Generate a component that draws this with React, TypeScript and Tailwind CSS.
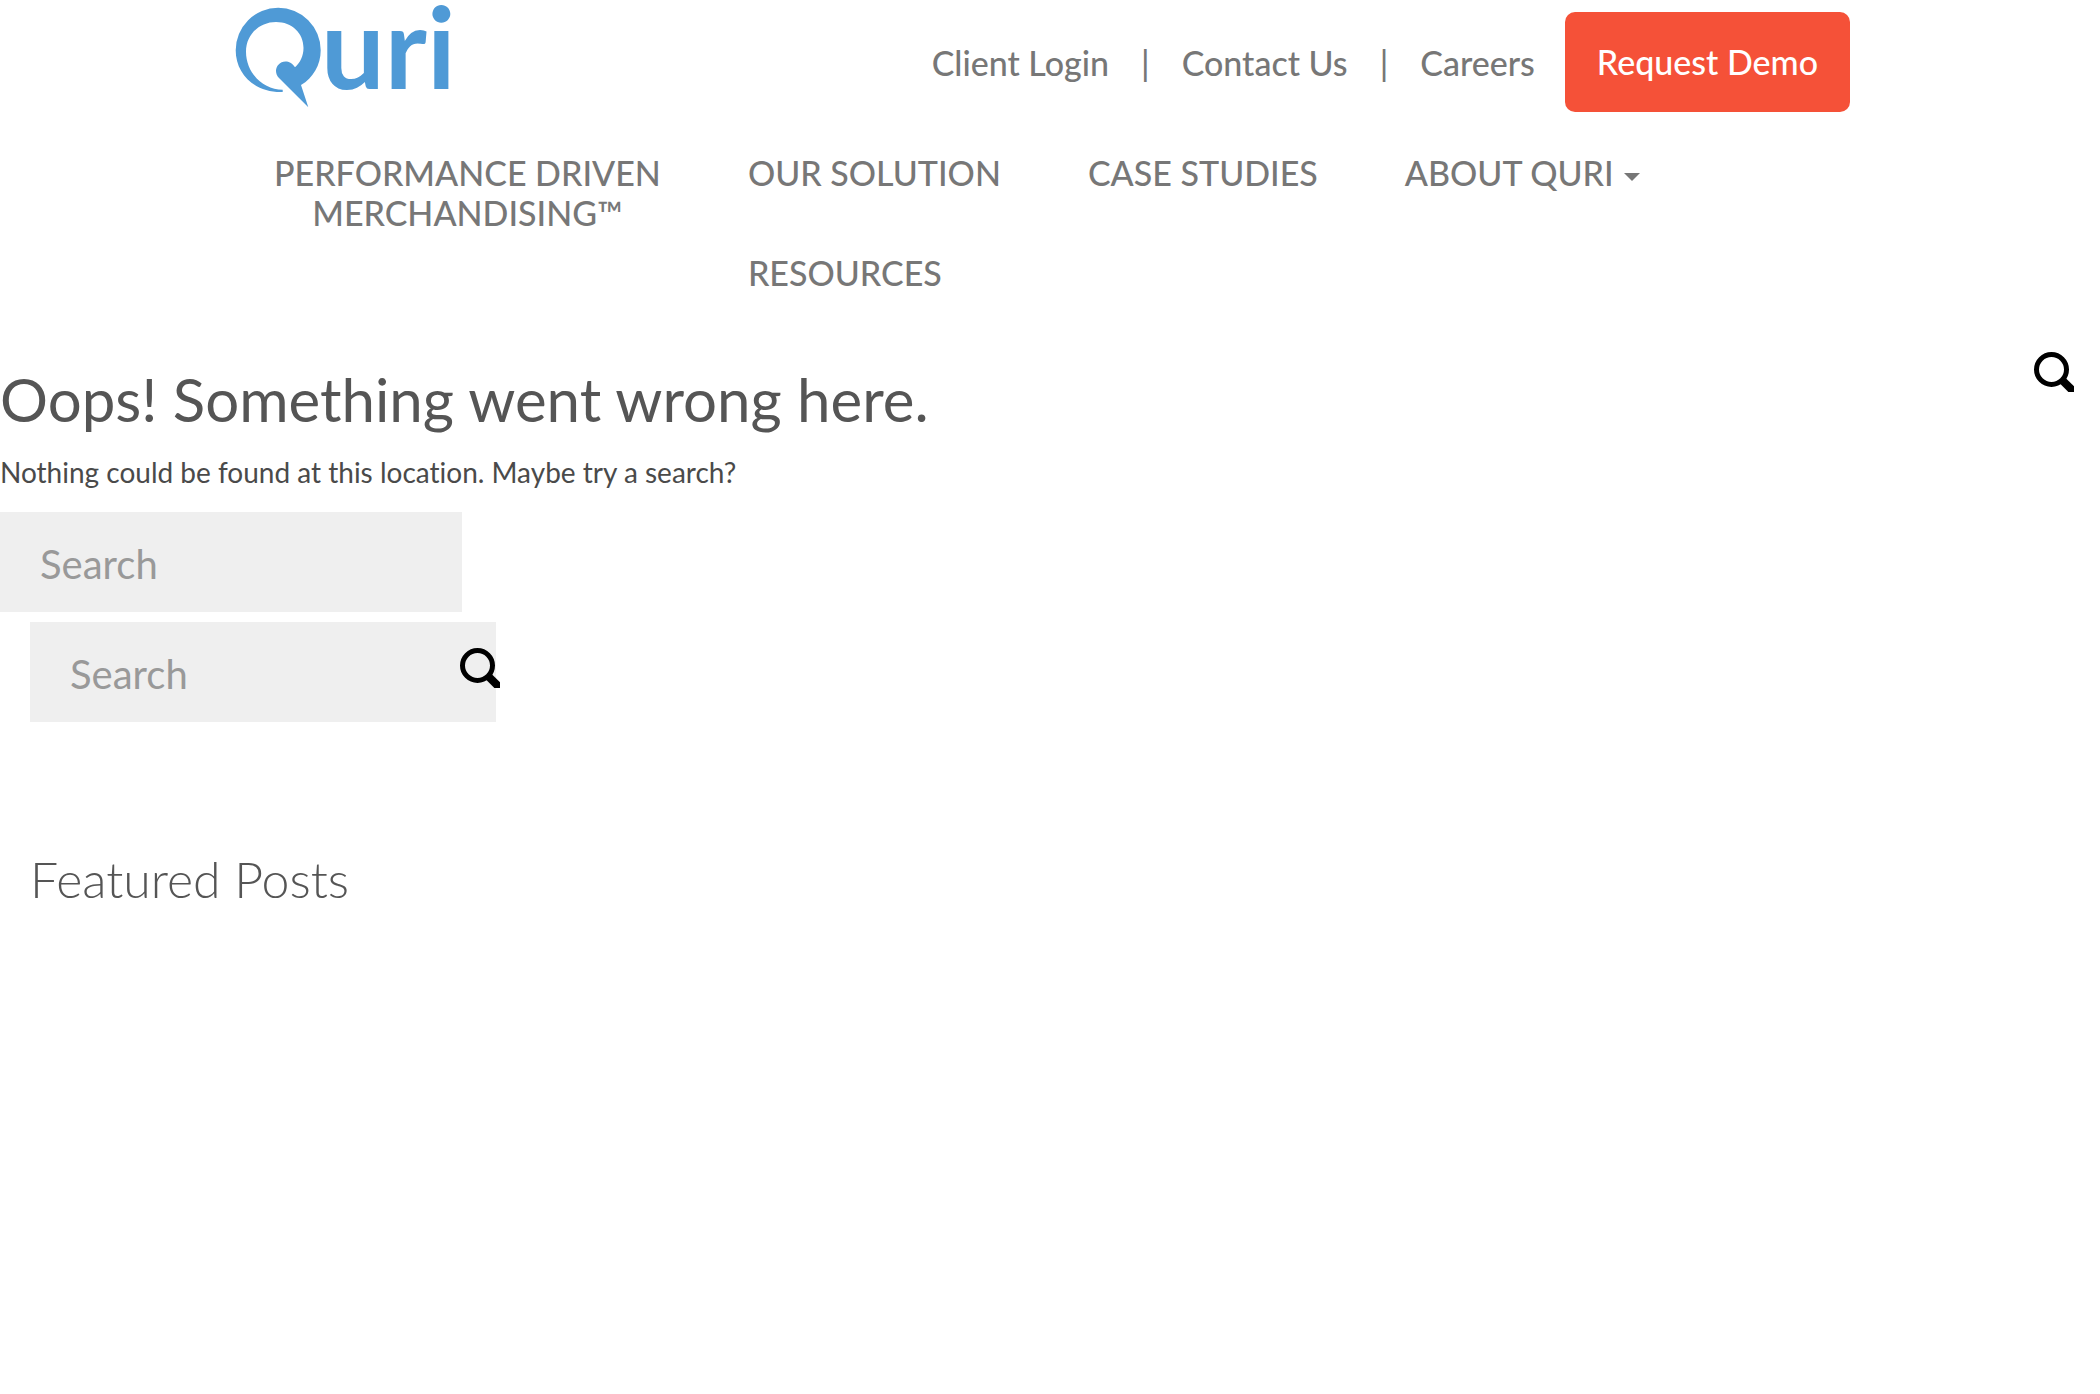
import React from "react";

function QuriLogo() {
  return (
    <svg viewBox="0 0 220 106" className="h-[106px] w-[220px] overflow-visible" role="img" aria-label="Quri">
      <g fill="#4f9ad6">
        <path d="M47.7 85.7C28 85.500 11 69 11 47.700C11 30 25 18 41 18C57 18 68.500 29 68.500 44C68.500 52 65 59 60 63.300C57 59 54 57.500 50.500 57.500C45 57.500 41 62 41 67C41 69.500 42 72 44 74L73.300 103.300L66 81C78 74 85.700 61 85.700 46.200A42.500 42.500 0 1 0 .7 46.200C.7 70 20 89 47.700 88Z" />
        <text x="86" y="85" fontSize="113" fontWeight="700" fontFamily="Lato, sans-serif">uri</text>
      </g>
    </svg>
  );
}

function SearchIcon() {
  return (
    <svg viewBox="0 0 40 40" className="block size-10" fill="none" stroke="#000" aria-hidden="true">
      <circle cx="17.500" cy="17.500" r="15" strokeWidth="5" />
      <path d="M28 28 42 42" strokeWidth="8" />
    </svg>
  );
}

const topLinks = ["Client Login", "Contact Us", "Careers"];

const fieldClass =
  "block h-[100px] bg-[#efefef] px-10 pt-[3px] text-[40px] text-[#555] outline-none placeholder:text-[#999] placeholder:opacity-100";

export default function App() {
  return (
    <div className="min-h-screen bg-white font-[Lato,sans-serif] text-[#555] [font-variant-ligatures:none]">
      <header className="pr-[250px] pl-[235px] text-[34px] leading-10 font-medium text-[#777]">
        <div className="flex items-start justify-between">
          <a href="#home" className="block pt-1">
            <QuriLogo />
          </a>
          <div className="flex items-center pt-3">
            <ul className="flex items-center pt-[2px]">
              {topLinks.map((label, i) => (
                <li key={label} className="flex">
                  {i > 0 && <span className="px-8">|</span>}
                  <a href="#top">{label}</a>
                </li>
              ))}
            </ul>
            <button type="button" className="ml-[30px] h-[100px] rounded-[10px] bg-[#f55138] px-8 text-white">
              Request Demo
            </button>
          </div>
        </div>
        <nav className="mt-[41px] flex items-start gap-[87px] pl-[39px]">
          <a href="#pdm" className="text-center">
            PERFORMANCE DRIVEN
            <br />
            MERCHANDISING™
          </a>
          <div className="flex flex-col gap-[60px]">
            <div className="flex gap-[87px]">
              <a href="#solution">OUR SOLUTION</a>
              <a href="#cases">CASE STUDIES</a>
              <button type="button" className="flex items-center gap-[10px]">
                ABOUT QURI
                <svg viewBox="0 0 16 8" className="mt-2 h-2 w-4" fill="#777" aria-hidden="true">
                  <path d="M0 0h16L8 8z" />
                </svg>
              </button>
            </div>
            <a href="#resources">RESOURCES</a>
          </div>
        </nav>
      </header>

      <main className="mt-[59px]">
        <div className="flex items-start justify-between">
          <div>
            <h1 className="pt-[14px] text-[60px] leading-[66px]">Oops! Something went wrong here.</h1>
            <p className="mt-5 text-[28px] leading-10 text-[#4a4a4a]">
              Nothing could be found at this location. Maybe try a search?
            </p>
          </div>
          <button type="button" aria-label="Open search" className="mr-[26px]">
            <SearchIcon />
          </button>
        </div>
        <form className="mt-5">
          <input type="text" aria-label="Search site" placeholder="Search" className={fieldClass + " w-[462px]"} />
        </form>
        <aside className="mt-[10px] pl-[30px]">
          <form className="relative w-[466px]">
            <input type="text" aria-label="Search posts" placeholder="Search" className={fieldClass + " w-full"} />
            <button type="submit" aria-label="Submit search" className="absolute top-[26px] -right-1">
              <SearchIcon />
            </button>
          </form>
          <h2 className="mt-[127px] text-[50px] leading-[60px] font-light">Featured Posts</h2>
        </aside>
      </main>
    </div>
  );
}
